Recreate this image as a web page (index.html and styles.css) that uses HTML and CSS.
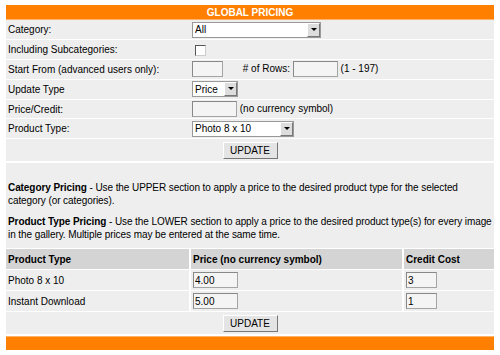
FILE: index.html
```html
<!DOCTYPE html>
<html lang="en">
<head>
  <meta charset="UTF-8" />
  <title>Global Pricing</title>
  <link rel="stylesheet" href="styles.css">
</head>
<body>

  <div class="pricing">
    <!-- Header -->
    <div class="bar">GLOBAL PRICING</div>

    <!-- Upper section -->
    <table class="form">
      <tr>
        <td class="label">Category:</td>
        <td>
          <span class="select" style="width: 129px;">
            <select><option>All</option></select>
            <span class="arrow"></span>
          </span>
        </td>
      </tr>
      <tr>
        <td class="label">Including Subcategories:</td>
        <td><span class="check"></span></td>
      </tr>
      <tr>
        <td class="label">Start From (advanced users only):</td>
        <td>
          <input type="text" class="field" style="width: 31px;" />
          <span class="rows-label"># of Rows:</span>
          <input type="text" class="field" style="width: 45px;" />
          (1 - 197)
        </td>
      </tr>
      <tr>
        <td class="label">Update Type</td>
        <td>
          <span class="select" style="width: 46px;">
            <select><option>Price</option></select>
            <span class="arrow"></span>
          </span>
        </td>
      </tr>
      <tr>
        <td class="label">Price/Credit:</td>
        <td><input type="text" class="field" style="width: 45px;" /> (no currency symbol)</td>
      </tr>
      <tr>
        <td class="label">Product Type:</td>
        <td>
          <span class="select" style="width: 102px;">
            <select><option>Photo 8 x 10</option></select>
            <span class="arrow"></span>
          </span>
        </td>
      </tr>
      <tr class="submit-row">
        <td colspan="2"><button class="btn">UPDATE</button></td>
      </tr>
    </table>

    <!-- Help text -->
    <div class="help">
      <p><b>Category Pricing</b> - Use the UPPER section to apply a price to the desired product type for the selected category (or categories).</p>
      <p><b>Product Type Pricing</b> - Use the LOWER section to apply a price to the desired product type(s) for every image in the gallery. Multiple prices may be entered at the same time.</p>
    </div>

    <!-- Lower section -->
    <table class="products">
      <tr class="head">
        <td class="col-type">Product Type</td>
        <td class="col-price">Price (no currency symbol)</td>
        <td class="col-credit">Credit Cost</td>
      </tr>
      <tr>
        <td class="col-type">Photo 8 x 10</td>
        <td class="col-price"><input type="text" class="field" style="width: 45px;" value="4.00" /></td>
        <td class="col-credit"><input type="text" class="field" style="width: 31px;" value="3" /></td>
      </tr>
      <tr>
        <td class="col-type">Instant Download</td>
        <td class="col-price"><input type="text" class="field" style="width: 45px;" value="5.00" /></td>
        <td class="col-credit"><input type="text" class="field" style="width: 31px;" value="1" /></td>
      </tr>
      <tr class="submit-row">
        <td colspan="3"><button class="btn">UPDATE</button></td>
      </tr>
    </table>

    <div class="bar bar-bottom"></div>
  </div>

</body>
</html>
```
FILE: styles.css
```css
/* Reset & Base */
* {
  margin: 0;
  padding: 0;
  box-sizing: border-box;
}
html, body {
  background: #fff;
  color: #000;
  font-family: 'Liberation Sans', Arial, sans-serif;
  font-size: 10px;
}

/* Wrapper */
.pricing {
  width: 488px;
  margin: 5px 6px;
}

/* Orange bars */
.bar {
  background: #ff8000;
  color: #fff;
  font-weight: bold;
  text-align: center;
  height: 15px;
  line-height: 15px;
  border-bottom: 1px solid #ffb266;
}
.bar-bottom {
  height: 14px;
  border-bottom: none;
  border-top: 1px solid #ffb266;
}

/* Tables */
table {
  width: 100%;
  border-collapse: collapse;
}
td {
  background: #eee;
  height: 20px;
  padding: 0 2px;
  border-bottom: 1px solid #fff;
  vertical-align: middle;
  white-space: nowrap;
}
.form td {
  height: 19.8px;
}
.form .label {
  width: 184px;
}
.submit-row td {
  text-align: center;
  height: 23px;
  border-bottom: 2px solid #fff;
}
.products td {
  height: 21px;
}
.products .submit-row td {
  height: 23px;
}
.rows-label {
  margin: 0 0 0 17px;
}

/* Fields */
.field {
  height: 16px;
  border: 1px solid #a4a4a4;
  border-top-color: #888;
  border-left-color: #888;
  background: #f4f4f4;
  font-family: inherit;
  font-size: 10px;
  padding: 0 1px;
  vertical-align: middle;
}
.check {
  display: inline-block;
  width: 11px;
  height: 11px;
  margin-left: 3px;
  border: 1px solid #555;
  border-right-color: #ccc;
  border-bottom-color: #ccc;
  background: #fff;
  vertical-align: middle;
}

/* Select boxes */
.select {
  position: relative;
  display: inline-block;
  height: 16px;
  vertical-align: middle;
}
.select select {
  appearance: none;
  -webkit-appearance: none;
  width: 100%;
  height: 16px;
  border: 1px solid #999;
  background: #fff;
  font-family: inherit;
  font-size: 10px;
  padding: 0 2px;
  color: #000;
}
.select .arrow {
  position: absolute;
  top: 1px;
  right: 1px;
  width: 13px;
  height: 14px;
  background: #ddd;
  border: 1px solid;
  border-color: #fff #777 #777 #fff;
}
.select .arrow::after {
  content: '';
  position: absolute;
  left: 3px;
  top: 4px;
  border-left: 3px solid transparent;
  border-right: 3px solid transparent;
  border-top: 3px solid #000;
}

/* Button */
.btn {
  width: 55px;
  height: 17px;
  background: #e4e4e4;
  border: 1px solid;
  border-color: #fff #777 #777 #fff;
  font-family: inherit;
  font-size: 10px;
  color: #000;
}

/* Help text */
.help {
  background: #eee;
  padding: 18px 0 7px 2px;
  line-height: 13px;
  letter-spacing: -0.08px;
  border-bottom: 1px solid #fff;
}
.help p {
  margin-bottom: 8px;
}
.help p:last-child {
  margin-bottom: 0;
}

/* Product table */
.products .head td {
  background: #d4d4d4;
  font-weight: bold;
}
.products .col-type {
  width: 184px;
  border-right: 2px solid #fff;
}
.products .col-price {
  width: 213px;
  border-right: 2px solid #fff;
}
```
